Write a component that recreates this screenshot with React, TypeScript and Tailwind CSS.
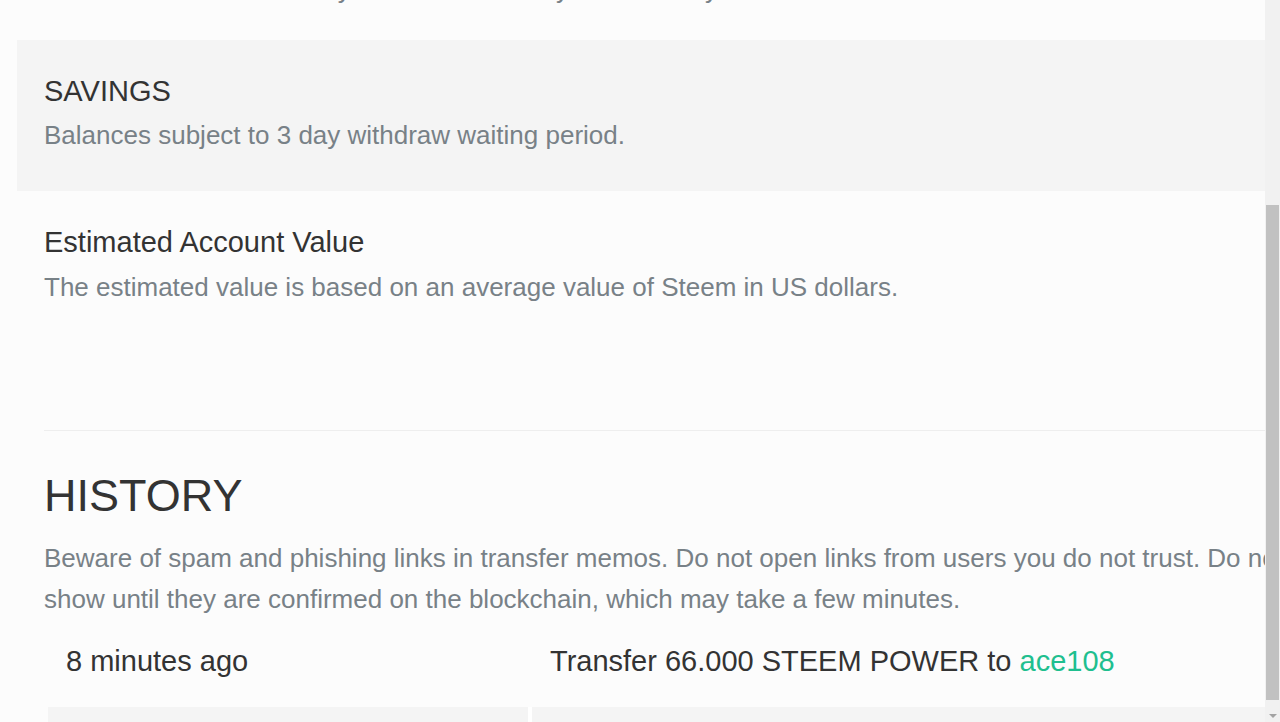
import React from 'react'

const sans = { fontFamily: '"Liberation Sans", Arial, sans-serif' }

function Scrollbar() {
  return (
    <div className="flex w-[15px] shrink-0 flex-col bg-[#f1f1f1]">
      <div className="h-[205px]" />
      <div className="mx-px h-[495px] bg-[#c1c1c1]" />
      <div className="flex flex-1 items-end justify-center pb-[4px]">
        <div className="h-0 w-0 border-x-[4px] border-t-[4px] border-x-transparent border-t-[#a3a3a3]" />
      </div>
    </div>
  )
}

export default function App() {
  return (
    <div className="flex h-[722px] w-[1280px] overflow-hidden bg-[#fcfcfc]" style={sans}>
      <div className="w-[1265px] shrink-0 overflow-hidden">
        <div className="w-[1700px] pl-[17px]">
          {/* tail of the previous balance description */}
          <p className="mt-[-31px] whitespace-nowrap pl-[27px] text-[26px] leading-[41px] text-[#788187]">
            Tradeable tokens that may be transferred anywhere at anytime.
          </p>

          {/* Savings */}
          <div className="mt-[30px] bg-[#f4f4f4] px-[27px] pt-[34px] pb-[35px]">
            <h3 className="text-[29px] leading-[34px] text-[#333]">SAVINGS</h3>
            <p className="mt-[7px] text-[26px] leading-[41px] text-[#788187]">
              Balances subject to 3 day withdraw waiting period.
            </p>
          </div>

          {/* Estimated value */}
          <div className="px-[27px] pt-[34px]">
            <h3 className="text-[29px] leading-[34px] text-[#333]">Estimated Account Value</h3>
            <p className="mt-[8px] text-[26px] leading-[41px] text-[#788187]">
              The estimated value is based on an average value of Steem in US dollars.
            </p>
          </div>

          <div className="ml-[27px] mt-[122px] h-px bg-[#eeeeee]" />

          {/* History */}
          <div className="px-[27px]">
            <h2 className="mt-[38px] text-[45px] leading-[54px] text-[#333]">HISTORY</h2>
            <p className="mt-[15px] whitespace-nowrap text-[26px] leading-[41px] text-[#788187]">
              Beware of spam and phishing links in transfer memos. Do not open links from users you do not trust. Do not provide your private keys to any third party websites. Transactions will not
              <br />
              show until they are confirmed on the blockchain, which may take a few minutes.
            </p>
          </div>

          <div className="ml-[31px]">
            <div className="grid h-[87px] grid-cols-[484px_1fr] items-center pb-[4px] text-[29px] text-[#333]">
              <div className="pl-[18px]">8 minutes ago</div>
              <div className="pl-[18px]">
                Transfer 66.000 STEEM POWER to <span className="text-[#1fbf8f]">ace108</span>
              </div>
            </div>
            <div className="grid h-[60px] grid-cols-[480px_1fr] gap-x-[4px] bg-white">
              <div className="bg-[#f4f4f4]" />
              <div className="bg-[#f4f4f4]" />
            </div>
          </div>
        </div>
      </div>
      <Scrollbar />
    </div>
  )
}
